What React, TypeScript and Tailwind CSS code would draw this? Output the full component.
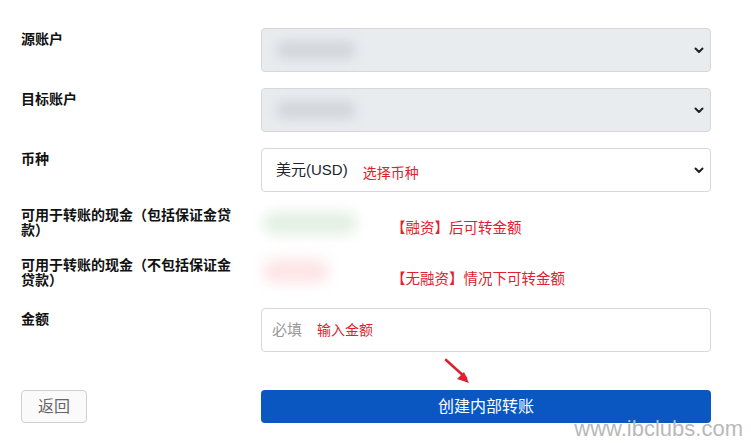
import React from "react";

const font = { fontFamily: '"Liberation Sans", "Noto Sans CJK SC", sans-serif' };

function Chevron() {
  return (
    <svg width="10" height="7" viewBox="0 0 10 7" className="shrink-0">
      <path d="M1.5 1.5 L5 5 L8.5 1.5" fill="none" stroke="#222" strokeWidth="2" strokeLinecap="round" strokeLinejoin="round" />
    </svg>
  );
}

function BlurSelect() {
  return (
    <div className="h-[44px] w-full flex items-center justify-between rounded-[4px] border border-[#d6d8db] bg-[#e9ecef] pl-[14px] pr-[6px]">
      <div className="h-[18px] w-[80px] rounded-full bg-[#d2d5d9] blur-[6px]" />
      <Chevron />
    </div>
  );
}

function Label({ children }: { children: React.ReactNode }) {
  return (
    <div className="w-[240px] shrink-0 pr-[22px] pt-[4px] text-[14px] leading-[15px] font-bold text-[#111]">
      {children}
    </div>
  );
}

export default function App() {
  return (
    <div className="relative w-[751px] h-[443px] bg-white overflow-hidden" style={font}>
      <div className="pt-[28px] pl-[21px] pr-[40px]">
        {/* source account */}
        <div className="flex h-[60px]">
          <Label>源账户</Label>
          <BlurSelect />
        </div>
        {/* target account */}
        <div className="flex h-[60px]">
          <Label>目标账户</Label>
          <BlurSelect />
        </div>
        {/* currency */}
        <div className="flex h-[58px]">
          <Label>币种</Label>
          <div className="h-[44px] w-full flex items-center justify-between rounded-[4px] border border-[#d6d8db] bg-white pl-[14px] pr-[6px]">
            <div className="flex items-center">
              <span className="text-[15px] text-[#212529]">美元(USD)</span>
              <span className="ml-[15px] mt-[6px] text-[14px] text-[#e0202f]">选择币种</span>
            </div>
            <Chevron />
          </div>
        </div>
        {/* cash incl. margin loan */}
        <div className="flex h-[50px]">
          <div className="w-[240px] shrink-0 pr-[22px] pt-[2px] text-[14px] leading-[15px] font-bold text-[#111]">
            可用于转账的现金（包括保证金贷款）
          </div>
          <div className="flex items-start">
            <div className="mt-[6px] ml-[2px] h-[22px] w-[94px] rounded-full bg-[#e2efe2] blur-[7px]" />
            <span className="ml-[34px] mt-[12px] text-[14.5px] text-[#e0202f]">【融资】后可转金额</span>
          </div>
        </div>
        {/* cash excl. margin loan */}
        <div className="flex h-[52px]">
          <div className="w-[240px] shrink-0 pr-[22px] pt-[2px] text-[14px] leading-[15px] font-bold text-[#111]">
            可用于转账的现金（不包括保证金贷款）
          </div>
          <div className="flex items-start">
            <div className="mt-[3px] ml-[2px] h-[24px] w-[66px] rounded-full bg-[#fde4e6] blur-[7px]" />
            <span className="ml-[62px] mt-[13px] text-[14.5px] text-[#e0202f]">【无融资】情况下可转金额</span>
          </div>
        </div>
        {/* amount */}
        <div className="flex h-[82px]">
          <Label>金额</Label>
          <div className="relative w-full">
            <div className="h-[44px] w-full flex items-center rounded-[4px] border border-[#d6d8db] bg-white pl-[10px]">
              <span className="text-[15px] text-[#999]">必填</span>
              <span className="ml-[15px] text-[14px] text-[#e0202f]">输入金额</span>
            </div>
            <svg className="absolute left-[181px] top-[49px]" width="32" height="30" viewBox="0 0 32 30">
              <path d="M4 3 L24 21" stroke="#e0202f" strokeWidth="2.6" strokeLinecap="round" />
              <path d="M27 26 L15 22 L22 15 Z" fill="#e0202f" />
            </svg>
          </div>
        </div>
        {/* actions */}
        <div className="flex">
          <div className="w-[240px] shrink-0">
            <button className="h-[33px] w-[66px] rounded-[4px] border border-[#cfcfcf] bg-[#fafafa] text-[16px] text-[#666]">
              返回
            </button>
          </div>
          <button className="h-[33px] w-full rounded-[4px] bg-[#0b57c1] text-[16px] text-white">
            创建内部转账
          </button>
        </div>
      </div>
      <div className="absolute right-[8px] bottom-[1px] text-[22px] leading-[26px] text-[#b9b9b9]" style={{ fontFamily: '"Liberation Sans", sans-serif' }}>
        www.ibclubs.com
      </div>
    </div>
  );
}
